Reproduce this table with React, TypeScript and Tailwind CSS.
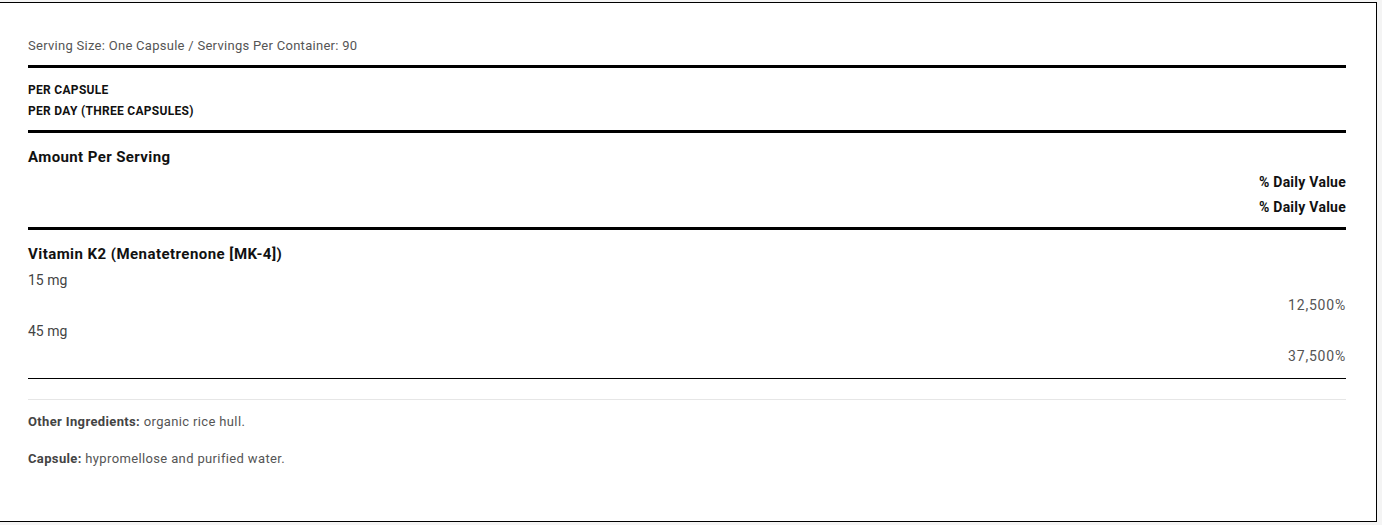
import React from 'react';

type Row = { name: string; amounts: { amount: string; dv: string }[] };

const nutrients: Row[] = [
  {
    name: 'Vitamin K2 (Menatetrenone [MK-4])',
    amounts: [
      { amount: '15 mg', dv: '12,500%' },
      { amount: '45 mg', dv: '37,500%' },
    ],
  },
];

const App: React.FC = () => {
  return (
    <div className="w-full h-[525px] bg-[#f4f4f4] overflow-hidden" style={{ fontFamily: 'Roboto, "Liberation Sans", sans-serif' }}>
      <div className="mt-[2px] w-[1377px] h-[520px] bg-white border-t border-r border-b border-black pl-[28px] pr-[30px]">
        {/* Serving info */}
        <p className="pt-[33px] text-[13px] leading-[20px] tracking-[0.28px] text-[#555]">
          Serving Size: One Capsule / Servings Per Container: 90
        </p>
        <div className="mt-[9px] h-[3px] bg-black" />

        {/* Column headings */}
        <div className="pt-[12px] pb-[8px] text-[12px] leading-[21px] tracking-[0.3px] font-bold text-[#111] uppercase">
          <div>Per Capsule</div>
          <div>Per Day (Three Capsules)</div>
        </div>
        <div className="h-[3px] bg-black" />

        <div className="pt-[11px] font-bold text-[#111]">
          <div className="text-[15px] leading-[26px] tracking-[0.4px]">Amount Per Serving</div>
          <div className="text-[14px] leading-[25px] tracking-[0.25px] text-right">% Daily Value</div>
          <div className="text-[14px] leading-[25px] tracking-[0.25px] text-right">% Daily Value</div>
        </div>
        <div className="mt-[7px] h-[3px] bg-black" />

        {/* Nutrients */}
        <div className="pt-[12px] text-[14px]">
          {nutrients.map((n) => (
            <div key={n.name}>
              <div className="text-[15px] leading-[25.5px] tracking-[0.45px] font-bold text-[#111]">{n.name}</div>
              {n.amounts.map((a) => (
                <div key={a.amount}>
                  <div className="leading-[25.5px] text-[#444]">{a.amount}</div>
                  <div className="leading-[25.5px] tracking-[0.8px] text-right text-[#555]">{a.dv}</div>
                </div>
              ))}
            </div>
          ))}
        </div>
        <div className="mt-[8px] h-px bg-black" />

        <div className="mt-[20px] h-px bg-[#e6e6e6]" />

        {/* Other ingredients */}
        <div className="pt-[12px] text-[13px] leading-[20px] tracking-[0.36px] text-[#555]">
          <p>
            <span className="font-bold text-[#444]">Other Ingredients:</span> organic rice hull.
          </p>
          <p className="mt-[17px]">
            <span className="font-bold text-[#444]">Capsule:</span> hypromellose and purified water.
          </p>
        </div>
      </div>
    </div>
  );
};

export default App;
